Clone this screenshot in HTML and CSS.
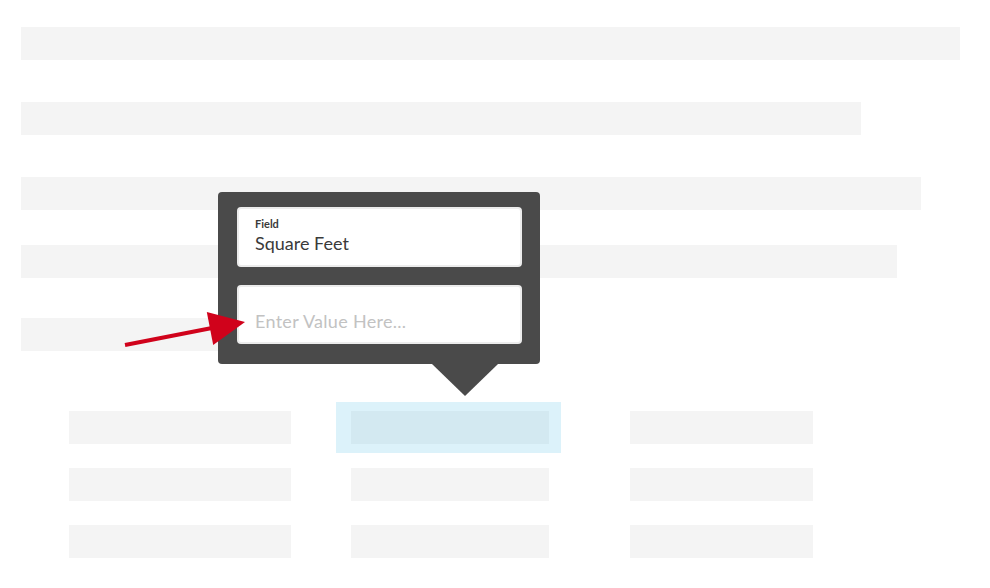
FILE: index.html
```html
<!DOCTYPE html>
<html>
<head>
<meta charset="utf-8">
<link rel="stylesheet" href="styles.css">
</head>
<body>
<div class="page">
  <div class="bars">
    <div class="bar b1"></div>
    <div class="bar b2"></div>
    <div class="bar b3"></div>
    <div class="bar b4"></div>
    <div class="bar b5"></div>
  </div>
  <div class="grid">
    <div class="col c1">
      <div class="cell"></div>
      <div class="cell"></div>
      <div class="cell"></div>
    </div>
    <div class="col c2">
      <div class="cell active"></div>
      <div class="cell"></div>
      <div class="cell"></div>
    </div>
    <div class="col c3">
      <div class="cell"></div>
      <div class="cell"></div>
      <div class="cell"></div>
    </div>
  </div>

  <div class="popover">
    <div class="field">
      <div class="field-label">Field</div>
      <div class="field-value">Square Feet</div>
    </div>
    <div class="field">
      <input class="field-input" type="text" placeholder="Enter Value Here...">
    </div>
  </div>

  <svg class="pointer" width="130" height="45" viewBox="0 0 130 45">
    <line x1="5" y1="40" x2="92" y2="23" stroke="#d0021b" stroke-width="4"/>
    <polygon points="125,17 86.8,7 93.2,40" fill="#d0021b"/>
  </svg>
</div>
</body>
</html>
```

FILE: styles.css
```css
html, body {
  margin: 0;
  padding: 0;
  background: #ffffff;
}

.page {
  position: relative;
  width: 990px;
  height: 588px;
  overflow: hidden;
  font-family: Lato, "Open Sans", sans-serif;
}

.bars {
  display: flex;
  flex-direction: column;
  padding: 27px 0 0 21px;
}

.bar {
  height: 33px;
  background: #f4f4f4;
}

.b1 { width: 939px; }
.b2 { width: 840px; margin-top: 42px; }
.b3 { width: 900px; margin-top: 42px; }
.b4 { width: 876px; margin-top: 35px; }
.b5 { width: 400px; margin-top: 40px; }

.grid {
  display: flex;
  padding: 60px 0 0 69px;
}

.col {
  display: flex;
  flex-direction: column;
  gap: 24px;
}

.c1 { width: 222px; }
.c2 { width: 198px; margin-left: 60px; position: relative; z-index: 0; }
.c3 { width: 183px; margin-left: 81px; }

.cell {
  height: 33px;
  background: #f4f4f4;
}

.cell.active {
  position: relative;
  background: #d3e9f1;
}

.cell.active::before {
  content: "";
  position: absolute;
  top: -9px;
  bottom: -9px;
  left: -15px;
  right: -12px;
  background: #dcf2fa;
  z-index: -1;
}

.popover {
  position: absolute;
  left: 218px;
  top: 192px;
  width: 322px;
  height: 172px;
  box-sizing: border-box;
  background: #4a4a4a;
  border-radius: 4px;
  padding: 15px 18px 0 19px;
  display: flex;
  flex-direction: column;
  gap: 18px;
  z-index: 2;
}

.popover::after {
  content: "";
  position: absolute;
  left: 214px;
  top: 172px;
  border-left: 33px solid transparent;
  border-right: 33px solid transparent;
  border-top: 32px solid #4a4a4a;
}

.field {
  height: 60px;
  box-sizing: border-box;
  background: #ffffff;
  border: 2px solid #ececec;
  border-radius: 4px;
  padding: 8px 16px 0;
}

.field + .field { height: 59px; }

.field-label {
  font-size: 11px;
  line-height: 13px;
  font-weight: 700;
  color: #3a3a3a;
}

.field-value {
  margin-top: 2px;
  font-size: 18px;
  line-height: 22px;
  color: #3a3a3a;
}

.field-input {
  display: block;
  width: 100%;
  box-sizing: border-box;
  margin: 15px 0 0;
  padding: 0;
  border: 0;
  outline: none;
  background: transparent;
  font-family: Lato, "Open Sans", sans-serif;
  font-size: 18px;
  letter-spacing: 0.3px;
  line-height: 22px;
  height: 22px;
  color: #3a3a3a;
}

.field-input::placeholder {
  color: #c2c2c2;
  opacity: 1;
}

.pointer {
  position: absolute;
  left: 120px;
  top: 305px;
  z-index: 3;
}
```
